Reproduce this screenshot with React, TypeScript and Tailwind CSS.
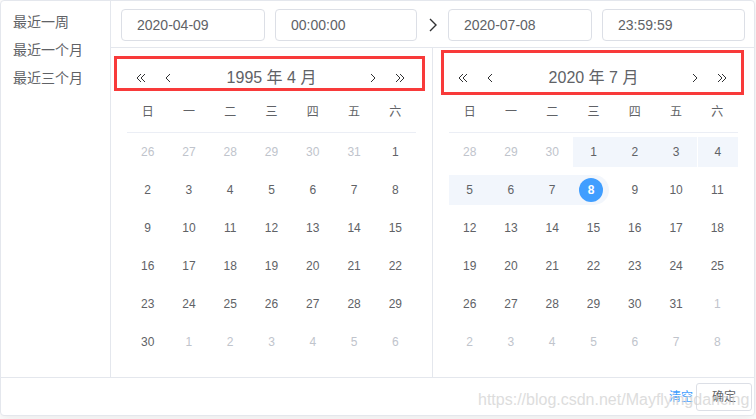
import React from "react";

type Cell = { d: number; muted?: boolean; range?: "in" | "end" };

const font = { fontFamily: '"Liberation Sans", Arial, "Noto Sans CJK SC", sans-serif' };

const weekDays = ["日", "一", "二", "三", "四", "五", "六"];

const leftRows: Cell[][] = [
  [26, 27, 28, 29, 30, 31].map((d) => ({ d, muted: true })).concat([{ d: 1 }]),
  [2, 3, 4, 5, 6, 7, 8].map((d) => ({ d })),
  [9, 10, 11, 12, 13, 14, 15].map((d) => ({ d })),
  [16, 17, 18, 19, 20, 21, 22].map((d) => ({ d })),
  [23, 24, 25, 26, 27, 28, 29].map((d) => ({ d })),
  [{ d: 30 }].concat([1, 2, 3, 4, 5, 6].map((d) => ({ d, muted: true }))),
];

const rightRows: Cell[][] = [
  [28, 29, 30].map((d) => ({ d, muted: true }) as Cell).concat([1, 2, 3, 4].map((d) => ({ d, range: "in" }) as Cell)),
  [5, 6, 7].map((d) => ({ d, range: "in" }) as Cell).concat([{ d: 8, range: "end" }, { d: 9 }, { d: 10 }, { d: 11 }]),
  [12, 13, 14, 15, 16, 17, 18].map((d) => ({ d })),
  [19, 20, 21, 22, 23, 24, 25].map((d) => ({ d })),
  [26, 27, 28, 29, 30, 31].map((d) => ({ d }) as Cell).concat([{ d: 1, muted: true }]),
  [2, 3, 4, 5, 6, 7, 8].map((d) => ({ d, muted: true })),
];

const DoubleLeft = () => (
  <svg width="10" height="10" viewBox="0 0 10 10" fill="none" stroke="#303133" strokeWidth="1">
    <path d="M5 1 L1 5 L5 9 M9 1 L5 5 L9 9" />
  </svg>
);
const DoubleRight = () => (
  <svg width="10" height="10" viewBox="0 0 10 10" fill="none" stroke="#303133" strokeWidth="1">
    <path d="M1 1 L5 5 L1 9 M5 1 L9 5 L5 9" />
  </svg>
);
const Left = () => (
  <svg width="10" height="10" viewBox="0 0 10 10" fill="none" stroke="#303133" strokeWidth="1">
    <path d="M7 1 L3 5 L7 9" />
  </svg>
);
const Right = () => (
  <svg width="10" height="10" viewBox="0 0 10 10" fill="none" stroke="#303133" strokeWidth="1">
    <path d="M3 1 L7 5 L3 9" />
  </svg>
);

const DateInput = ({ value, w }: { value: string; w: string }) => (
  <div
    className={`${w} h-[32px] border border-[#dcdfe6] rounded-[4px] pl-[15px] flex items-center text-[14px] text-[#606266]`}
  >
    {value}
  </div>
);

const Calendar = ({ title, rows }: { title: string; rows: Cell[][] }) => (
  <div className="px-[16px] pt-[16px]">
    {/* header */}
    <div className="h-[28px] flex items-center">
      <div className="w-[60px] flex items-center pl-[9px] gap-[17px]">
        <DoubleLeft />
        <Left />
      </div>
      <div className="flex-1 text-center text-[16px] text-[#606266]">{title}</div>
      <div className="w-[60px] flex items-center justify-end pr-[11px] gap-[17px]">
        <Right />
        <DoubleRight />
      </div>
    </div>

    {/* week days */}
    <div className="grid grid-cols-7 h-[41px] border-b border-[#ebeef5] items-center">
      {weekDays.map((w) => (
        <div key={w} className="text-center text-[12px] text-[#606266]">
          {w}
        </div>
      ))}
    </div>

    {/* dates */}
    {rows.map((row, ri) => (
      <div key={ri} className="grid grid-cols-7">
        {row.map((c, ci) => (
          <div key={ci} className="h-[38px] flex items-center">
            <div
              className={`h-[30px] w-full flex items-center justify-center ${
                c.range === "in" ? "bg-[#f2f6fc]" : ""
              } ${c.range === "end" ? "bg-[#f2f6fc] mr-[5px] rounded-r-[15px]" : ""} ${
                ri === 0 && ci === 6 && c.range ? "border-l border-white" : ""
              }`}
            >
              {c.range === "end" ? (
                <span className="w-[24px] h-[24px] rounded-full bg-[#409eff] text-white font-bold text-[12px] flex items-center justify-center">
                  {c.d}
                </span>
              ) : (
                <span className={`text-[12px] ${c.muted ? "text-[#c0c4cc]" : "text-[#606266]"}`}>{c.d}</span>
              )}
            </div>
          </div>
        ))}
      </div>
    ))}
  </div>
);

const App = () => {
  return (
    <div className="w-[756px] h-[419px] bg-white" style={font}>
      <div className="relative w-[755px] h-[416px] border border-[#e4e7ed] rounded-[4px] shadow-[0_2px_12px_0_rgba(0,0,0,0.1)] bg-white flex flex-col">
        <div className="flex h-[376px]">
          {/* shortcuts */}
          <div className="w-[110px] border-r border-[#e4e7ed] pt-[7px] pl-[12px]">
            {["最近一周", "最近一个月", "最近三个月"].map((s) => (
              <div key={s} className="h-[28px] leading-[28px] text-[14px] text-[#606266]">
                {s}
              </div>
            ))}
          </div>

          {/* main */}
          <div className="flex-1 flex flex-col">
            <div className="h-[47px] border-b border-[#e4e7ed] pt-[8px] pl-[10px] flex items-start">
              <DateInput value="2020-04-09" w="w-[144px]" />
              <div className="w-[10px]" />
              <DateInput value="00:00:00" w="w-[142px]" />
              <div className="w-[31px] h-[32px] flex items-center justify-center">
                <svg width="8" height="14" viewBox="0 0 8 14" fill="none" stroke="#303133" strokeWidth="1.4">
                  <path d="M1 1 L7 7 L1 13" />
                </svg>
              </div>
              <DateInput value="2020-07-08" w="w-[144px]" />
              <div className="w-[10px]" />
              <DateInput value="23:59:59" w="w-[143px]" />
            </div>

            <div className="flex flex-1">
              <div className="relative w-[322px] border-r border-[#e4e7ed]">
                <Calendar title="1995 年 4 月" rows={leftRows} />
                <div className="absolute left-[3px] top-[8px] w-[311px] h-[35px] border-[3px] border-[#f83a3a]" />
              </div>
              <div className="relative flex-1">
                <Calendar title="2020 年 7 月" rows={rightRows} />
                <div className="absolute left-[8px] top-[2px] w-[303px] h-[45px] border-[3px] border-[#f83a3a]" />
              </div>
            </div>
          </div>
        </div>

        {/* footer */}
        <div className="h-[38px] border-t border-[#e4e7ed] flex items-start justify-end pt-[5px] pr-[2px]">
          <span className="text-[12px] text-[#409eff] leading-[28px] mr-[3px]">清空</span>
          <div className="w-[56px] h-[28px] border border-[#dcdfe6] rounded-[3px] flex items-center justify-center text-[12px] text-[#606266]">
            确定
          </div>
        </div>

        <div className="absolute left-[477px] top-[389px] text-[16px] leading-[20px] text-[#cfcfcf] opacity-70 pointer-events-none">
          https://blog.csdn.net/Mayflyingdancing
        </div>
      </div>
    </div>
  );
};

export default App;
